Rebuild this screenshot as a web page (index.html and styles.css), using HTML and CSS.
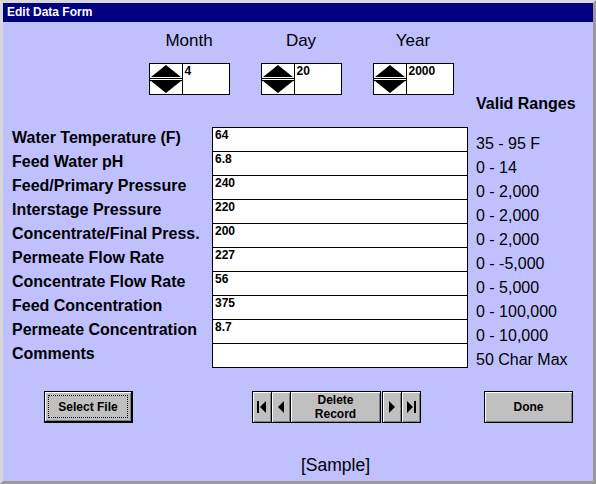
FILE: index.html
```
<!DOCTYPE html>
<html lang="en">
<head>
    <meta charset="UTF-8">
    <title>Edit Data Form</title>
    <link rel="stylesheet" href="styles.css">
</head>
<body>
    <div class="window">
        <div class="titlebar">Edit Data Form</div>
        <div class="content">
            <div class="dates">
                <div class="date-col">
                    <div class="date-label">Month</div>
                    <div class="spinner">
                        <svg class="spin-arrows" width="32" height="30" viewBox="0 0 32 30"><polygon points="1,13 16,1 31,13" fill="#000"/><rect x="0" y="14" width="32" height="1" fill="#000"/><rect x="0" y="15" width="32" height="1" fill="#fff"/><rect x="0" y="16" width="32" height="1" fill="#000"/><polygon points="1,17 16,29 31,17" fill="#000"/></svg>
                        <div class="spin-value">4</div>
                    </div>
                </div>
                <div class="date-col">
                    <div class="date-label">Day</div>
                    <div class="spinner">
                        <svg class="spin-arrows" width="32" height="30" viewBox="0 0 32 30"><polygon points="1,13 16,1 31,13" fill="#000"/><rect x="0" y="14" width="32" height="1" fill="#000"/><rect x="0" y="15" width="32" height="1" fill="#fff"/><rect x="0" y="16" width="32" height="1" fill="#000"/><polygon points="1,17 16,29 31,17" fill="#000"/></svg>
                        <div class="spin-value">20</div>
                    </div>
                </div>
                <div class="date-col">
                    <div class="date-label">Year</div>
                    <div class="spinner">
                        <svg class="spin-arrows" width="32" height="30" viewBox="0 0 32 30"><polygon points="1,13 16,1 31,13" fill="#000"/><rect x="0" y="14" width="32" height="1" fill="#000"/><rect x="0" y="15" width="32" height="1" fill="#fff"/><rect x="0" y="16" width="32" height="1" fill="#000"/><polygon points="1,17 16,29 31,17" fill="#000"/></svg>
                        <div class="spin-value">2000</div>
                    </div>
                </div>
            </div>

            <div class="valid-title">Valid Ranges</div>

            <div class="form">
                <div class="row"><div class="label">Water Temperature (F)</div><div class="field">64</div><div class="range">35 - 95 F</div></div>
                <div class="row"><div class="label">Feed Water pH</div><div class="field">6.8</div><div class="range">0 - 14</div></div>
                <div class="row"><div class="label">Feed/Primary Pressure</div><div class="field">240</div><div class="range">0 - 2,000</div></div>
                <div class="row"><div class="label">Interstage Pressure</div><div class="field">220</div><div class="range">0 - 2,000</div></div>
                <div class="row"><div class="label">Concentrate/Final Press.</div><div class="field">200</div><div class="range">0 - 2,000</div></div>
                <div class="row"><div class="label">Permeate Flow Rate</div><div class="field">227</div><div class="range">0 - -5,000</div></div>
                <div class="row"><div class="label">Concentrate Flow Rate</div><div class="field">56</div><div class="range">0 - 5,000</div></div>
                <div class="row"><div class="label">Feed Concentration</div><div class="field">375</div><div class="range">0 - 100,000</div></div>
                <div class="row"><div class="label">Permeate Concentration</div><div class="field">8.7</div><div class="range">0 - 10,000</div></div>
                <div class="row last"><div class="label">Comments</div><div class="field"></div><div class="range">50 Char Max</div></div>
            </div>

            <div class="buttons">
                <button class="btn btn-default"><span class="focus">Select File</span></button>
                <div class="nav">
                    <button class="btn nav-btn"><svg width="10" height="12" viewBox="0 0 10 12"><rect x="0" y="0" width="2" height="12" fill="#000"/><polygon points="9,0 3,6 9,12" fill="#000"/></svg></button>
                    <button class="btn nav-btn"><svg width="6" height="12" viewBox="0 0 6 12"><polygon points="6,0 0,6 6,12" fill="#000"/></svg></button>
                    <button class="btn nav-delete">Delete<br>Record</button>
                    <button class="btn nav-btn nav-gap"><svg width="6" height="12" viewBox="0 0 6 12"><polygon points="0,0 6,6 0,12" fill="#000"/></svg></button>
                    <button class="btn nav-btn"><svg width="10" height="12" viewBox="0 0 10 12"><polygon points="1,0 7,6 1,12" fill="#000"/><rect x="8" y="0" width="2" height="12" fill="#000"/></svg></button>
                </div>
                <button class="btn btn-done">Done</button>
            </div>

            <div class="sample">[Sample]</div>
        </div>
    </div>
</body>
</html>
```

FILE: styles.css
```
body {
    margin: 0;
    font-family: "Liberation Sans", Arial, sans-serif;
    color: #000;
}
.window {
    box-sizing: border-box;
    width: 596px;
    height: 484px;
    border: 3px solid #c0c0c0;
    border-top-color: #d8d8d8;
    border-left-color: #d8d8d8;
    border-right-color: #9a9a9a;
    border-bottom-color: #9a9a9a;
    display: flex;
    flex-direction: column;
    background: #c0c0ff;
}
.titlebar {
    height: 19px;
    line-height: 19px;
    background: #000080;
    color: #fff;
    font-size: 12px;
    font-weight: bold;
    padding-left: 4px;
}
.content {
    flex: 1;
    background: #c0c0ff;
    padding-top: 10px;
}
.dates {
    display: flex;
    margin-left: 130px;
}
.date-col {
    width: 112px;
    display: flex;
    flex-direction: column;
    align-items: center;
}
.date-label {
    font-size: 17px;
    line-height: 18px;
    height: 18px;
}
.spinner {
    margin-top: 13px;
    box-sizing: border-box;
    width: 81px;
    height: 32px;
    border: 1px solid #000;
    background: #fff;
    display: flex;
}
.spin-arrows {
    display: block;
    flex: none;
    border-right: 1px solid #000;
}
.spin-value {
    font-size: 12px;
    font-weight: bold;
    line-height: 12px;
    padding: 1px 2px;
}
.valid-title {
    margin-left: 473px;
    font-size: 16px;
    font-weight: bold;
    line-height: 18px;
}
.form {
    margin-top: 14px;
    padding-left: 9px;
}
.row {
    display: flex;
    height: 24px;
}
.label {
    width: 200px;
    font-size: 16px;
    font-weight: bold;
    line-height: 22px;
    white-space: nowrap;
}
.field {
    box-sizing: border-box;
    width: 256px;
    height: 25px;
    background: #fff;
    border: 1px solid #000;
    font-size: 12px;
    font-weight: bold;
    line-height: 12px;
    padding: 1px 2px;
}
.range {
    margin-left: 8px;
    padding-top: 8px;
    font-size: 16px;
    line-height: 18px;
    white-space: nowrap;
}
.buttons {
    margin-top: 24px;
    display: flex;
    align-items: flex-start;
}
.btn {
    box-sizing: border-box;
    height: 32px;
    margin: 0;
    padding: 0;
    background: #c0c0c0;
    border: 1px solid #000;
    box-shadow: inset 1px 1px #fff, inset -1px -1px #808080;
    font-family: "Liberation Sans", Arial, sans-serif;
    font-size: 12px;
    font-weight: bold;
    color: #000;
    display: flex;
    align-items: center;
    justify-content: center;
}
.btn-default {
    margin-left: 41px;
    width: 89px;
    border-right-width: 2px;
    border-bottom-width: 2px;
    padding: 3px;
}
.focus {
    flex: 1;
    align-self: stretch;
    display: flex;
    align-items: center;
    justify-content: center;
    border: 1px dotted #000;
}
.nav {
    display: flex;
    margin-left: 119px;
}
.nav-btn {
    width: 20px;
    margin-left: -1px;
}
.nav-btn:first-child {
    margin-left: 0;
}
.nav-delete {
    width: 91px;
    margin-left: -1px;
    line-height: 14px;
    text-align: center;
}
.nav-gap {
    margin-left: 1px;
}
.btn-done {
    width: 89px;
    margin-left: 63px;
}
.sample {
    margin-top: 33px;
    margin-left: 298px;
    font-size: 17.5px;
    line-height: 18px;
}
```
